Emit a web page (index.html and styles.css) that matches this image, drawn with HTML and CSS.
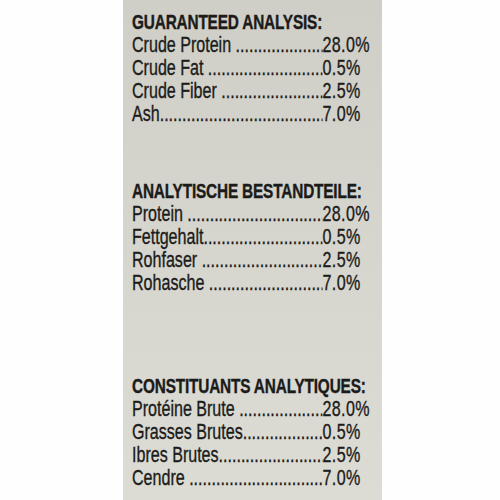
FILE: index.html
```html
<!DOCTYPE html>
<html lang="en">
<head>
    <meta charset="UTF-8">
    <title>Analysis</title>
    <link rel="stylesheet" href="styles.css">
</head>
<body>

    <div class="label">
        <div class="content">

            <div class="section">
                <h2>GUARANTEED ANALYSIS:</h2>
                <div class="row"><span class="name">Crude Protein&nbsp;</span><span class="dots"></span><span class="value">28.0%</span></div>
                <div class="row"><span class="name">Crude Fat&nbsp;</span><span class="dots"></span><span class="value">0.5%</span></div>
                <div class="row"><span class="name">Crude Fiber&nbsp;</span><span class="dots"></span><span class="value">2.5%</span></div>
                <div class="row"><span class="name">Ash</span><span class="dots"></span><span class="value">7.0%</span></div>
            </div>

            <div class="section section-de">
                <h2>ANALYTISCHE BESTANDTEILE:</h2>
                <div class="row"><span class="name">Protein&nbsp;</span><span class="dots"></span><span class="value">28.0%</span></div>
                <div class="row"><span class="name">Fettgehalt</span><span class="dots"></span><span class="value">0.5%</span></div>
                <div class="row"><span class="name">Rohfaser&nbsp;</span><span class="dots"></span><span class="value">2.5%</span></div>
                <div class="row"><span class="name">Rohasche&nbsp;</span><span class="dots"></span><span class="value">7.0%</span></div>
            </div>

            <div class="section section-fr">
                <h2>CONSTITUANTS ANALYTIQUES:</h2>
                <div class="row"><span class="name">Protéine Brute&nbsp;</span><span class="dots"></span><span class="value">28.0%</span></div>
                <div class="row"><span class="name">Grasses Brutes</span><span class="dots"></span><span class="value">0.5%</span></div>
                <div class="row"><span class="name">Ibres Brutes</span><span class="dots"></span><span class="value">2.5%</span></div>
                <div class="row"><span class="name">Cendre&nbsp;</span><span class="dots"></span><span class="value">7.0%</span></div>
            </div>

        </div>
    </div>

</body>
</html>
```

FILE: styles.css
```css
body {
    margin: 0;
    padding: 0;
    background: #fefefe;
    font-family: "Liberation Sans", Arial, sans-serif;
    color: #1b1b19;
}

.label {
    width: 259px;
    height: 500px;
    margin-left: 123px;
    padding: 10px 0 0 9px;
    box-sizing: border-box;
    background: linear-gradient(#cfcec7, #d6d5ce 50%, #dcdbd4);
}

/* schmale Schrift nachbilden */
.content {
    width: 336px;
    transform: scaleX(0.73);
    transform-origin: 0 0;
}

.section-de {
    margin-top: 54px;
}

.section-fr {
    margin-top: 80px;
}

h2 {
    margin: 0;
    font-size: 21px;
    line-height: 23px;
    font-weight: bold;
    letter-spacing: -0.2px;
    white-space: nowrap;
    -webkit-text-stroke: 0.4px #1b1b19;
}

.row {
    display: flex;
    font-size: 22px;
    line-height: 23px;
    white-space: nowrap;
    -webkit-text-stroke: 0.35px #1b1b19;
}

.dots {
    flex: 1;
    overflow: hidden;
}

.dots::after {
    content: "........................................................................";
}

.value {
    width: 75px;
    letter-spacing: 0.5px;
}
```
